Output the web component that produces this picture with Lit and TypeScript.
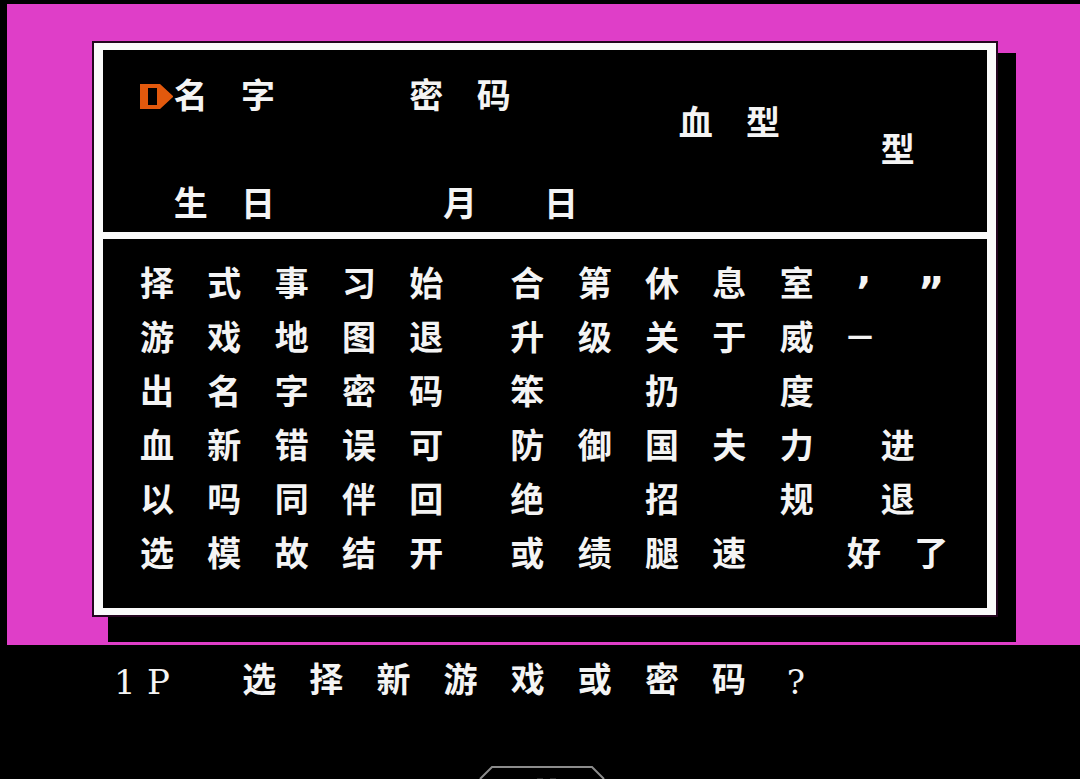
import { LitElement, html, css } from "lit";
import { customElement } from "lit/decorators.js";
import { styleMap } from "lit/directives/style-map.js";

type Glyph = [column: number, text: string, kind?: string];

const CHARACTER_ROWS: Glyph[][] = [
  [[1, "择"], [3, "式"], [5, "事"], [7, "习"], [9, "始"], [12, "合"], [14, "第"], [16, "休"], [18, "息"], [20, "室"], [22, "’", "quote"], [24, "”", "quote"]],
  [[1, "游"], [3, "戏"], [5, "地"], [7, "图"], [9, "退"], [12, "升"], [14, "级"], [16, "关"], [18, "于"], [20, "威"], [22, "—", "dash"]],
  [[1, "出"], [3, "名"], [5, "字"], [7, "密"], [9, "码"], [12, "笨"], [16, "扔"], [20, "度"]],
  [[1, "血"], [3, "新"], [5, "错"], [7, "误"], [9, "可"], [12, "防"], [14, "御"], [16, "国"], [18, "夫"], [20, "力"], [23, "进"]],
  [[1, "以"], [3, "吗"], [5, "同"], [7, "伴"], [9, "回"], [12, "绝"], [16, "招"], [20, "规"], [23, "退"]],
  [[1, "选"], [3, "模"], [5, "故"], [7, "结"], [9, "开"], [12, "或"], [14, "绩"], [16, "腿"], [18, "速"], [22, "好"], [24, "了"]],
];

const PROMPT: Glyph[] = [
  [1, "1", "latin"], [2, "P", "latin"],
  [5, "选"], [7, "择"], [9, "新"], [11, "游"], [13, "戏"], [15, "或"], [17, "密"], [19, "码"],
  [21, "?", "latin"],
];

@customElement("app-root")
export class AppRoot extends LitElement {
  static styles = css`
    :host {
      display: flex;
      flex-direction: column;
      min-height: 100vh;
      box-sizing: border-box;
      padding: 4px 0 0 7px;
      overflow: hidden;
      background: #000;
      color: #f4f4f4;
      font: 700 34px/32px "Noto Sans CJK SC", sans-serif;
    }
    .stage {
      background: #df3ec8;
      padding: 37px 64px 3px 85px;
    }
    .shadow {
      background: linear-gradient(#000, #000) 16px 12px no-repeat;
      padding: 0 18px 25px 0;
    }
    .frame {
      border: 2px solid #24051f;
      background: #000;
    }
    .panels {
      border: 7px solid #fafafa;
      border-left-width: 9px;
      border-right-width: 9px;
    }
    .tiles {
      display: grid;
      grid-template-columns: repeat(24, minmax(0, 1fr));
      align-items: center;
      margin: 0;
      padding: 0 39px 0 37px;
    }
    .record {
      grid-template-rows: repeat(5, 27px);
      padding-top: 30px;
      padding-bottom: 17px;
      border-bottom: 7px solid #fafafa;
    }
    .characters {
      grid-auto-rows: 54px;
      padding-top: 16px;
      padding-bottom: 29px;
    }
    .option {
      display: grid;
      grid-template-columns: subgrid;
      align-items: center;
      margin: 0;
      padding: 0;
      border: 0;
      background: none;
      color: inherit;
      font: inherit;
      text-align: left;
      cursor: pointer;
    }
    .field {
      display: grid;
      grid-template-columns: subgrid;
    }
    .name { grid-area: 1 / 2 / 2 / 6; }
    .password { grid-area: 1 / 9 / 2 / 13; }
    .blood { grid-area: 2 / 17 / 3 / 21; }
    .type { grid-area: 3 / 23; }
    .birth { grid-area: 5 / 2 / 6 / 6; }
    .month { grid-area: 5 / 10; }
    .day { grid-area: 5 / 13; }
    .second { grid-column: 3; }
    .cursor {
      grid-area: 1 / 1;
      align-self: start;
      display: block;
      width: 33px;
      height: 25px;
      margin-top: 4px;
    }
    .glyph {
      white-space: nowrap;
    }
    .quote {
      justify-self: center;
      padding-top: 20px;
      font-family: "DejaVu Sans", sans-serif;
      font-size: 40px;
    }
    .dash {
      font-family: "DejaVu Sans", sans-serif;
      font-size: 26px;
    }
    .latin {
      justify-self: center;
      padding-top: 8px;
      font-family: "DejaVu Serif", serif;
      font-weight: 400;
      font-size: 34px;
    }
    .message {
      grid-template-columns: repeat(25, minmax(0, 1fr));
      grid-auto-rows: 40px;
      padding: 13px 133px 0 101px;
    }
    .foot {
      display: flex;
      flex: 1;
      align-items: flex-end;
      justify-content: center;
      padding-right: 3px;
    }
    .badge {
      display: block;
      width: 126px;
      height: 13px;
    }
  `;

  private glyphs(items: Glyph[], row: number) {
    return items.map(
      ([column, text, kind = ""]) =>
        html`<span class="glyph ${kind}" style=${styleMap({ gridArea: `${row} / ${column}` })}>${text}</span>`,
    );
  }

  render() {
    return html`
      <main class="stage">
        <div class="shadow">
          <div class="frame">
            <div class="panels">
              <section class="tiles record">
                <svg class="cursor" viewBox="0 0 33 25" aria-hidden="true">
                  <path fill="#e2590d" fill-rule="evenodd" d="M0 0H20L33 12V13L20 25H0ZM8 4V21H17V4Z" />
                </svg>
                <button class="option name"><span>名</span><span class="second">字</span></button>
                <button class="option password"><span>密</span><span class="second">码</span></button>
                <div class="field blood"><span>血</span><span class="second">型</span></div>
                <span class="type">型</span>
                <div class="field birth"><span>生</span><span class="second">日</span></div>
                <span class="month">月</span>
                <span class="day">日</span>
              </section>
              <section class="tiles characters">
                ${CHARACTER_ROWS.map((row, index) => this.glyphs(row, index + 1))}
              </section>
            </div>
          </div>
        </div>
      </main>
      <p class="tiles message">${this.glyphs(PROMPT, 1)}</p>
      <div class="foot">
        <svg class="badge" viewBox="0 0 126 13" aria-hidden="true">
          <path fill="none" stroke="#8c8c8c" stroke-width="2" d="M1 13L13 1H113L125 13" />
          <path fill="none" stroke="#555" stroke-width="1" d="M58 13H64M71 13H77" />
        </svg>
      </div>
    `;
  }
}
